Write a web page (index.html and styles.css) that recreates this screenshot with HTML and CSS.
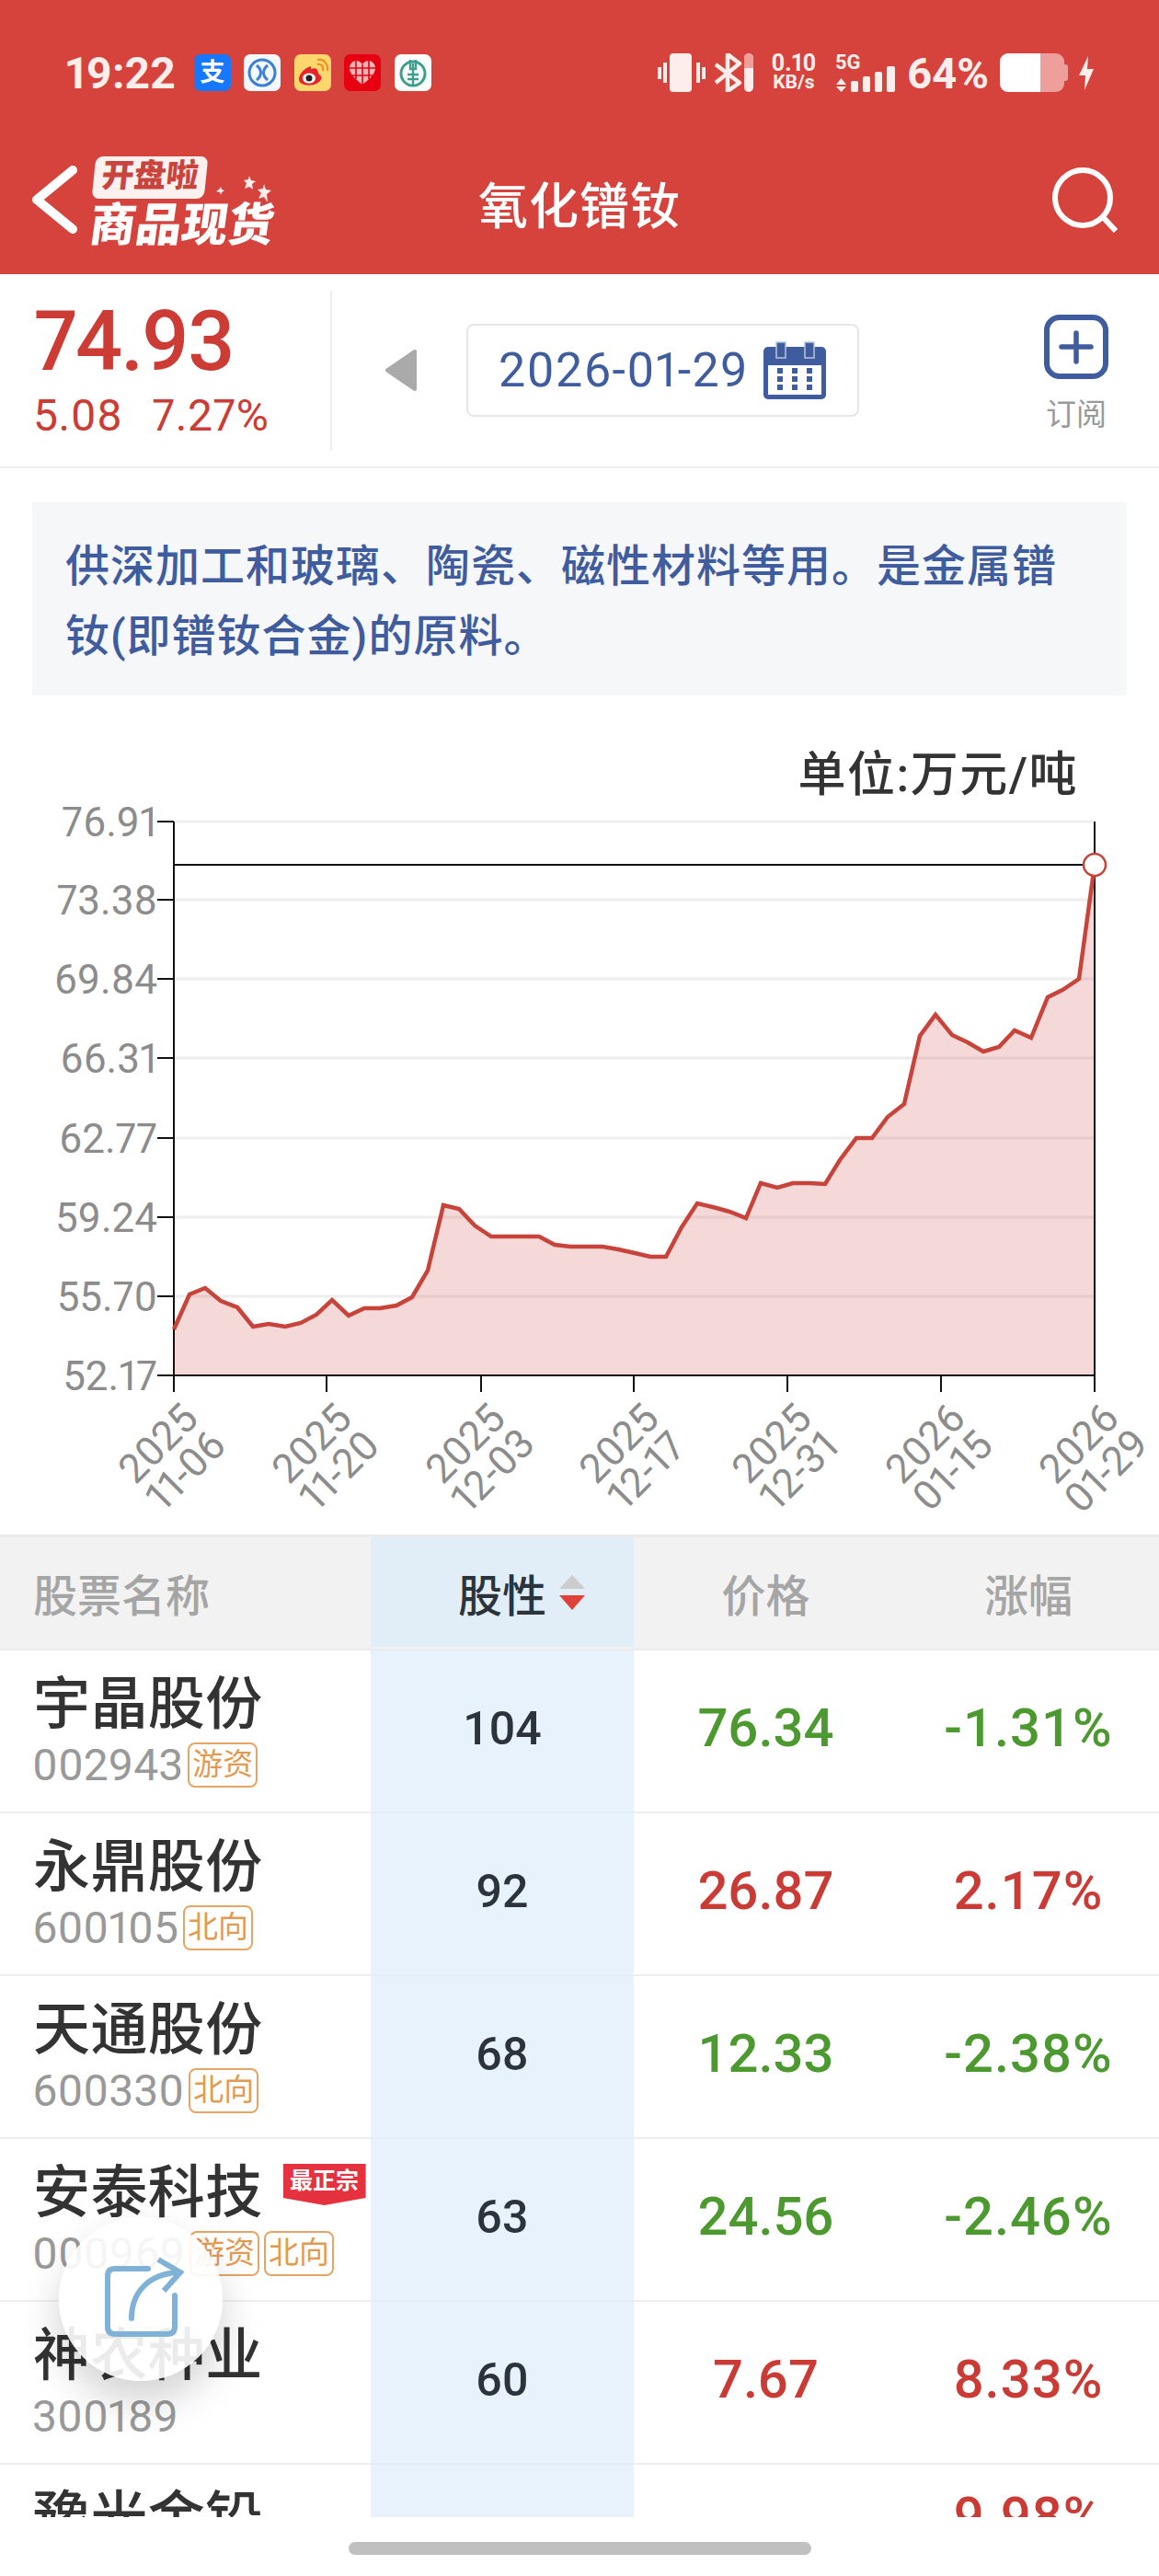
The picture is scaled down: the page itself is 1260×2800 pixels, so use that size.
FILE: index.html
```html
<!DOCTYPE html>
<html lang="zh-CN">
<head>
<meta charset="UTF-8">
<meta name="viewport" content="width=device-width, initial-scale=1.0">
<title>氧化镨钕</title>
<link rel="stylesheet" href="styles.css">
</head>
<body>

<header class="top-bar">
    <div class="status-row">
        <div class="status-left">
            <span class="clock">19:22</span>
            <div class="app-icons">
                <svg class="app-icon" viewBox="0 0 40 40">
                    <rect width="40" height="40" rx="7" fill="#1677ff"/>
                    <text x="20" y="29" text-anchor="middle" class="alipay-glyph">支</text>
                </svg>
                <svg class="app-icon" viewBox="0 0 40 40">
                    <rect width="40" height="40" rx="7" fill="#f4f7fb"/>
                    <circle cx="20" cy="20" r="14" fill="none" stroke="#3b7fd6" stroke-width="3"/>
                    <path d="M14 12c6 5 6 11 0 16M26 12c-6 5-6 11 0 16" fill="none" stroke="#3b7fd6" stroke-width="3"/>
                </svg>
                <svg class="app-icon" viewBox="0 0 40 40">
                    <rect width="40" height="40" rx="7" fill="#fdd66e"/>
                    <path d="M18 13c-7 2-14 9-13 15 1 6 12 7 19 4 6-3 7-8 3-10-1-1-1-3-2-5-1-2-4-2-7-1z" fill="#e6242b"/>
                    <ellipse cx="16" cy="26" rx="7" ry="5.5" fill="#fff"/>
                    <circle cx="16" cy="26" r="3.5" fill="#222"/>
                    <path d="M25 11c4-1 7 2 6 7M25 6c7-1 12 4 11 12" fill="none" stroke="#f08a1d" stroke-width="2"/>
                </svg>
                <svg class="app-icon" viewBox="0 0 40 40">
                    <rect width="40" height="40" rx="7" fill="#e60012"/>
                    <path d="M20 33C11 26 6 21 6 15c0-5 4-8 7-8 3 0 6 2 7 4 1-2 4-4 7-4 3 0 7 3 7 8 0 6-5 11-14 18z" fill="#f5b5b5"/>
                    <path d="M20 11v22M6 15h28M9 23h22M13 7v20M27 7v20" stroke="#e60012" stroke-width="1.6"/>
                </svg>
                <svg class="app-icon" viewBox="0 0 40 40">
                    <rect width="40" height="40" rx="7" fill="#fbfdfc"/>
                    <circle cx="20" cy="21" r="13" fill="none" stroke="#3f9f8c" stroke-width="3"/>
                    <path d="M17 6v10h6V6M20 10v24M14 22h12M14 27h12" fill="none" stroke="#3f9f8c" stroke-width="2.4"/>
                </svg>
            </div>
        </div>
        <div class="status-right">
            <svg class="vibrate-icon" viewBox="0 0 52 42">
                <rect x="13" width="24" height="42" rx="4"/>
                <rect y="15" width="4" height="13"/>
                <rect x="6" y="10" width="4" height="22"/>
                <rect x="42" y="10" width="4" height="22"/>
                <rect x="48" y="15" width="4" height="13"/>
            </svg>
            <svg class="bluetooth-icon" viewBox="0 0 42 42">
                <path d="M1 12L27 32L14 41V1L27 11L1 32" fill="none" stroke="#fdeeec" stroke-width="4.5" stroke-linejoin="round"/>
                <rect x="32" width="10" height="42" rx="5" fill="#fdeeec"/>
                <path d="M32 16V5a5 5 0 0 1 10 0v11z" fill="#f09f99"/>
            </svg>
            <div class="net-speed">
                <span class="speed-value">0.10</span>
                <span class="speed-unit">KB/s</span>
            </div>
            <svg class="signal-icon" viewBox="0 0 65 42">
                <text x="0" y="17" class="signal-text">5G</text>
                <path d="M6.500 27L12 34H1zM1 36H12L6.500 42z"/>
                <rect x="17" y="30" width="8" height="12" rx="2"/>
                <rect x="30" y="25" width="8" height="17" rx="2"/>
                <rect x="43" y="20" width="8" height="22" rx="2"/>
                <rect x="56" y="14" width="9" height="28" rx="2"/>
            </svg>
            <span class="battery-text">64%</span>
            <svg class="battery-icon" viewBox="0 0 74 42">
                <rect width="70" height="42" rx="9" fill="#ee9f9b"/>
                <path d="M9 0H44V42H9a9 9 0 0 1-9-9V9a9 9 0 0 1 9-9z" fill="#fff"/>
                <path d="M70 12h1a3 3 0 0 1 3 3v12a3 3 0 0 1-3 3h-1z" fill="#ee9f9b"/>
            </svg>
            <svg class="bolt-icon" viewBox="0 0 16 37">
                <path d="M10 0L0 21H7L6 37L16 14H9z" fill="#fdeeec"/>
            </svg>
        </div>
    </div>
    <nav class="nav-row">
        <div class="nav-left">
            <svg class="back-icon" viewBox="0 0 49 74">
                <path d="M44 5L5 37L44 69" fill="none" stroke="#fff" stroke-width="10" stroke-linecap="round" stroke-linejoin="round"/>
            </svg>
            <div class="logo">
                <div class="logo-top">
                    <span class="logo-badge"><span class="logo-badge-text">开盘啦</span></span>
                    <svg class="logo-stars" viewBox="0 0 60 30">
                        <path d="M36 0l2 5 5 1-4 3 1 6-4-3-5 2 2-6-3-3 5-1zM52 9l2 6 6 1-5 4 1 9-4-6-6 2 3-6-4-4 6-1zM5 12l1 3 3 1-3 2-1 3-1-3-4-1 3-2z" fill="#fdeeec"/>
                    </svg>
                </div>
                <div class="logo-name">商品现货</div>
            </div>
        </div>
        <h1 class="page-title">氧化镨钕</h1>
        <div class="nav-right">
            <svg class="search-icon" viewBox="0 0 71 71">
                <circle cx="33" cy="33" r="30" fill="none" stroke="#fff" stroke-width="6"/>
                <path d="M56 55L69 69" stroke="#fff" stroke-width="6"/>
            </svg>
        </div>
    </nav>
</header>

<section class="quote-row">
    <div class="price-box">
        <div class="price-now">74.93</div>
        <div class="price-change"><span>5.08</span><span>7.27%</span></div>
    </div>
    <svg class="prev-day" viewBox="0 0 36 47">
        <path d="M33 3V44L3 23.500z" fill="#aaa" stroke="#aaa" stroke-width="4" stroke-linejoin="round"/>
    </svg>
    <div class="date-box">
        <span class="date-text">2026-01-29</span>
        <svg class="calendar-icon" viewBox="0 0 68 63">
            <rect y="6" width="68" height="57" rx="5" fill="#3f5c9f"/>
            <rect x="5" y="26" width="58" height="32" fill="#fff"/>
            <rect x="14" y="1" width="10" height="17" fill="#3f5c9f" stroke="#b8c4dd" stroke-width="1.500"/>
            <rect x="45" y="1" width="10" height="17" fill="#3f5c9f" stroke="#b8c4dd" stroke-width="1.500"/>
            <path d="M15 29h6v6h-6zM31 29h6v6h-6zM47 29h6v6h-6zM15 38h6v6h-6zM31 38h6v6h-6zM47 38h6v6h-6zM15 47h6v6h-6zM31 47h6v6h-6zM47 47h6v6h-6z" fill="#3f5c9f"/>
        </svg>
    </div>
    <div class="subscribe">
        <svg class="subscribe-icon" viewBox="0 0 70 70">
            <rect x="3" y="3" width="64" height="64" rx="14" fill="none" stroke="#3f5c9f" stroke-width="6"/>
            <path d="M19 35H51M35 20V51" stroke="#3f5c9f" stroke-width="5.500" stroke-linecap="round"/>
        </svg>
        <span class="subscribe-label">订阅</span>
    </div>
</section>

<p class="intro">供深加工和玻璃、陶瓷、磁性材料等用。是金属镨钕(即镨钕合金)的原料。</p>

<section class="chart-section">
    <div class="chart-unit">单位:万元/吨</div>
    <svg class="price-chart" viewBox="0 870 1260 797">
        <g class="grid-lines">
            <path d="M189 892H1190M189 977H1190M189 1063H1190M189 1149H1190M189 1236H1190M189 1322H1190M189 1408H1190"/>
        </g>
        <path class="area" d="M189 1494V1444L206 1406L223 1399L240 1413L258 1420L275 1441L292 1438L310 1441L327 1437L344 1428L361 1412L379 1429L396 1421L413 1421L431 1418L448 1409L465 1380L482 1309L499 1313L516 1331L534 1343L586 1343L603 1352L620 1354L655 1354L672 1357L690 1361L707 1365L724 1365L741 1333L758 1307L775 1311L793 1316L811 1323L827 1285L845 1290L862 1285L880 1285L897 1286L913 1260L931 1236L948 1236L965 1213L983 1199L1000 1125L1017 1102L1035 1124L1052 1132L1069 1142L1086 1137L1103 1119L1121 1127L1139 1083L1155 1075L1173 1063L1190 939V1494z"/>
        <path class="axis" d="M171 892H189M171 977H189M171 1063H189M171 1149H189M171 1236H189M171 1322H189M171 1408H189M171 1494H1190M189 892V1512M355 1494V1512M523 1494V1512M689 1494V1512M856 1494V1512M1023 1494V1512M1190 892V1512"/>
        <path class="axis" d="M189 939H1190"/>
        <path class="line" d="M189 1444L206 1406L223 1399L240 1413L258 1420L275 1441L292 1438L310 1441L327 1437L344 1428L361 1412L379 1429L396 1421L413 1421L431 1418L448 1409L465 1380L482 1309L499 1313L516 1331L534 1343L586 1343L603 1352L620 1354L655 1354L672 1357L690 1361L707 1365L724 1365L741 1333L758 1307L775 1311L793 1316L811 1323L827 1285L845 1290L862 1285L880 1285L897 1286L913 1260L931 1236L948 1236L965 1213L983 1199L1000 1125L1017 1102L1035 1124L1052 1132L1069 1142L1086 1137L1103 1119L1121 1127L1139 1083L1155 1075L1173 1063L1190 939"/>
        <circle class="last-point" cx="1190" cy="939" r="12"/>
        <g class="y-labels">
            <text x="171" y="908">76.91</text>
            <text x="171" y="993">73.38</text>
            <text x="171" y="1079">69.84</text>
            <text x="171" y="1165">66.31</text>
            <text x="171" y="1252">62.77</text>
            <text x="171" y="1338">59.24</text>
            <text x="171" y="1424">55.70</text>
            <text x="171" y="1510">52.17</text>
        </g>
        <g class="x-labels">
            <g transform="translate(186 1582) rotate(-45)"><text y="-5">2025</text><text y="37">11-06</text></g>
            <g transform="translate(353 1582) rotate(-45)"><text y="-5">2025</text><text y="37">11-20</text></g>
            <g transform="translate(520 1582) rotate(-45)"><text y="-5">2025</text><text y="37">12-03</text></g>
            <g transform="translate(687 1582) rotate(-45)"><text y="-5">2025</text><text y="37">12-17</text></g>
            <g transform="translate(853 1582) rotate(-45)"><text y="-5">2025</text><text y="37">12-31</text></g>
            <g transform="translate(1020 1582) rotate(-45)"><text y="-5">2026</text><text y="37">01-15</text></g>
            <g transform="translate(1187 1582) rotate(-45)"><text y="-5">2026</text><text y="37">01-29</text></g>
        </g>
    </svg>
</section>

<section class="stock-table">
    <div class="table-head">
        <div class="head-cell head-name">股票名称</div>
        <div class="head-cell head-active">股性
            <svg class="sort-icon" viewBox="0 0 28 38">
                <path d="M14 0L28 15H0z" fill="#ccc"/>
                <path d="M0 22H28L14 38z" fill="#e0403a"/>
            </svg>
        </div>
        <div class="head-cell">价格</div>
        <div class="head-cell">涨幅</div>
    </div>

    <div class="stock-row">
        <div class="cell-name">
            <div class="stock-name">宇晶股份</div>
            <div class="stock-meta"><span class="stock-code">002943</span><span class="tag">游资</span></div>
        </div>
        <div class="cell-score">104</div>
        <div class="cell-num down">76.34</div>
        <div class="cell-num down">-1.31%</div>
    </div>
    <div class="stock-row">
        <div class="cell-name">
            <div class="stock-name">永鼎股份</div>
            <div class="stock-meta"><span class="stock-code">600105</span><span class="tag">北向</span></div>
        </div>
        <div class="cell-score">92</div>
        <div class="cell-num up">26.87</div>
        <div class="cell-num up">2.17%</div>
    </div>
    <div class="stock-row">
        <div class="cell-name">
            <div class="stock-name">天通股份</div>
            <div class="stock-meta"><span class="stock-code">600330</span><span class="tag">北向</span></div>
        </div>
        <div class="cell-score">68</div>
        <div class="cell-num down">12.33</div>
        <div class="cell-num down">-2.38%</div>
    </div>
    <div class="stock-row">
        <div class="cell-name">
            <div class="stock-name">安泰科技<span class="ribbon">最正宗</span></div>
            <div class="stock-meta"><span class="stock-code">000969</span><span class="tag">游资</span><span class="tag">北向</span></div>
        </div>
        <div class="cell-score">63</div>
        <div class="cell-num down">24.56</div>
        <div class="cell-num down">-2.46%</div>
    </div>
    <div class="stock-row">
        <div class="cell-name">
            <div class="stock-name">神农种业</div>
            <div class="stock-meta"><span class="stock-code">300189</span></div>
        </div>
        <div class="cell-score">60</div>
        <div class="cell-num up">7.67</div>
        <div class="cell-num up">8.33%</div>
    </div>
    <div class="stock-row">
        <div class="cell-name">
            <div class="stock-name">豫光金铅</div>
        </div>
        <div class="cell-score"></div>
        <div class="cell-num up"></div>
        <div class="cell-num up cell-raised">9.98%</div>
    </div>
</section>

<footer class="home-area">
    <div class="home-bar"></div>
</footer>

<div class="share-button">
    <svg class="share-icon" viewBox="0 0 90 90">
        <path d="M50 14H14Q6 14 6 22V77Q6 85 14 85H71Q79 85 79 77V43" fill="none" stroke="#7fb2d6" stroke-width="6" stroke-linecap="round"/>
        <path d="M32 68C32 40 50 20 82 18" fill="none" stroke="#7fb2d6" stroke-width="6" stroke-linecap="round"/>
        <path d="M61 4L85 18L67 38" fill="none" stroke="#7fb2d6" stroke-width="6"/>
    </svg>
</div>

</body>
</html>
```

FILE: styles.css
```css
* {
    box-sizing: border-box;
}
body {
    position: relative;
    margin: 0;
    width: 1260px;
    height: 2800px;
    overflow: hidden;
    background-color: #fff;
    font-family: Roboto, "Noto Sans CJK SC", sans-serif;
    font-variant-numeric: proportional-nums;
    color: #333;
}

/* red header */
.top-bar {
    height: 298px;
    background-color: #d5433c;
    color: #fdeeec;
}
.status-row {
    display: flex;
    justify-content: space-between;
    height: 137px;
    padding: 58px 71px 0;
}
.status-left {
    display: flex;
    align-items: center;
    gap: 20px;
    height: 42px;
}
.clock {
    font-size: 48px;
    font-weight: 700;
}
.app-icons {
    display: flex;
    gap: 14.500px;
}
.app-icon {
    width: 40px;
    height: 40px;
}
.alipay-glyph {
    font-size: 27px;
    font-weight: 700;
    fill: #fff;
}
.status-right {
    display: flex;
    align-items: center;
    height: 42px;
}
.vibrate-icon {
    width: 52px;
    height: 42px;
    fill: #fdeeec;
}
.bluetooth-icon {
    width: 42px;
    height: 42px;
    margin-left: 10px;
}
.net-speed {
    display: flex;
    flex-direction: column;
    align-items: center;
    width: 50px;
    margin-left: 19px;
    line-height: 21px;
    font-weight: 700;
}
.speed-value {
    font-size: 25px;
}
.speed-unit {
    font-size: 21px;
}
.signal-icon {
    width: 65px;
    height: 42px;
    margin-left: 20px;
    fill: #fdeeec;
}
.signal-text {
    font-size: 22px;
    font-weight: 700;
}
.battery-text {
    margin-left: 13px;
    font-size: 47px;
    font-weight: 700;
}
.battery-icon {
    width: 74px;
    height: 42px;
    margin-left: 12px;
}
.bolt-icon {
    width: 16px;
    height: 37px;
    margin-left: 12px;
}
.nav-row {
    display: grid;
    grid-template-columns: 1fr auto 1fr;
    align-items: center;
    height: 160px;
    padding: 0 45px 0 35px;
}
.nav-left {
    display: flex;
    align-items: center;
}
.back-icon {
    width: 49px;
    height: 74px;
}
.logo {
    display: flex;
    flex-direction: column;
    margin-left: 14px;
}
.logo-top {
    display: flex;
    align-items: flex-end;
    margin-left: 4px;
}
.logo-badge {
    display: flex;
    justify-content: center;
    width: 122px;
    height: 46px;
    border-radius: 8px;
    background-color: #fdf1ef;
    transform: skewX(-6deg);
}
.logo-badge-text {
    font-size: 35px;
    font-weight: 900;
    line-height: 44px;
    color: #c9443c;
    white-space: nowrap;
}
.logo-stars {
    width: 60px;
    height: 30px;
    margin: 0 0 -5px 11px;
}
.logo-name {
    margin-top: 9px;
    font-size: 50px;
    font-weight: 900;
    line-height: 40px;
    color: #fff;
    white-space: nowrap;
    transform: skewX(-8deg);
}
.page-title {
    margin: 6px 0 0 10px;
    font-size: 54px;
    font-weight: 500;
    letter-spacing: 1px;
    color: #fff;
}
.nav-right {
    display: flex;
    justify-content: flex-end;
}
.search-icon {
    width: 71px;
    height: 71px;
}

/* price and date */
.quote-row {
    display: flex;
    align-items: center;
    height: 211px;
    border-bottom: 2px solid #eee;
    padding-right: 55px;
}
.price-box {
    width: 361px;
    height: 174px;
    padding: 10px 0 0 37px;
    border-right: 2px solid #eee;
    color: #cc3b34;
}
.price-now {
    font-size: 90px;
    font-weight: 500;
    line-height: 92px;
    letter-spacing: -2px;
}
.price-change {
    display: flex;
    gap: 32px;
    margin: 8px 0 0 -1px;
    font-size: 48px;
    line-height: 52px;
    letter-spacing: 0.5px;
}
.prev-day {
    width: 36px;
    height: 47px;
    margin: 0 53px 0 57px;
}
.date-box {
    display: flex;
    align-items: center;
    justify-content: space-between;
    width: 427px;
    height: 101px;
    padding: 0 34px 0 33px;
    border: 2px solid #e6e6e6;
    border-radius: 8px;
}
.date-text {
    font-size: 52px;
    letter-spacing: 1.300px;
    color: #3f5c9f;
}
.calendar-icon {
    width: 68px;
    height: 63px;
}
.subscribe {
    display: flex;
    flex-direction: column;
    align-items: center;
    margin: 9px 0 0 auto;
}
.subscribe-icon {
    width: 70px;
    height: 70px;
}
.subscribe-label {
    margin-top: 17px;
    font-size: 33px;
    line-height: 44px;
    color: #999;
}

/* description */
.intro {
    height: 210px;
    margin: 37px 35px 0;
    padding: 32px 36px 23px;
    background-color: #f6f7f9;
    font-size: 48px;
    font-weight: 500;
    line-height: 76px;
    letter-spacing: 1px;
    color: #3f5c9f;
}

/* chart */
.chart-section {
    height: 912px;
    padding-top: 59px;
}
.chart-unit {
    height: 56px;
    padding-right: 88px;
    font-size: 52px;
    font-weight: 500;
    line-height: 56px;
    letter-spacing: 1.500px;
    text-align: right;
}
.price-chart {
    display: block;
    width: 1260px;
    height: 797px;
}
.grid-lines path {
    fill: none;
    stroke: #eee;
    stroke-width: 3;
}
.area {
    fill: rgba(205, 60, 60, 0.2);
}
.axis {
    fill: none;
    stroke: #111;
    stroke-width: 2;
}
.line {
    fill: none;
    stroke: #c8433a;
    stroke-width: 4.500;
}
.last-point {
    fill: #fff;
    stroke: #c8433a;
    stroke-width: 2.500;
}
.y-labels text {
    font-size: 44px;
    fill: #8c8c8c;
    text-anchor: end;
}
.x-labels text {
    font-size: 44px;
    fill: #8c8c8c;
    text-anchor: middle;
}

/* stock table */
.stock-table {
    height: 1068px;
    overflow: hidden;
}
.table-head,
.stock-row {
    display: grid;
    grid-template-columns: 403px 286px 287px 284px;
}
.table-head {
    height: 126px;
    padding-bottom: 2px;
    border-top: 3px solid #ebebeb;
    border-bottom: 2px solid #ebebeb;
    background-color: #f2f2f2;
}
.head-cell {
    display: flex;
    align-items: center;
    justify-content: center;
    font-size: 48px;
    font-weight: 500;
    color: #a5a5a5;
}
.head-name {
    justify-content: flex-start;
    padding-left: 36px;
}
.head-active {
    gap: 14px;
    background-color: #e1edf7;
    color: #2c333a;
}
.sort-icon {
    width: 28px;
    height: 38px;
    margin-right: -42px;
}
.stock-row {
    height: 177px;
}
.stock-row > div {
    border-bottom: 2px solid #eee;
}
.cell-name {
    padding: 24px 0 0 37px;
}
.stock-name {
    display: flex;
    align-items: flex-start;
    margin-left: -1px;
    font-size: 62px;
    font-weight: 500;
    line-height: 70px;
    letter-spacing: 0.4px;
}
.ribbon {
    display: flex;
    justify-content: center;
    width: 90px;
    height: 45px;
    margin: 3px 0 0 22px;
    background-color: #e5323e;
    clip-path: polygon(0 0, 100% 0, 100% 82%, 50% 100%, 0 82%);
    font-size: 25px;
    font-weight: 700;
    line-height: 38px;
    letter-spacing: 0;
    color: #fff;
}
.stock-meta {
    display: flex;
    align-items: center;
    gap: 5px;
    margin-top: 6px;
    margin-left: -2px;
}
.stock-code {
    font-size: 48px;
    line-height: 49px;
    color: #999;
}
.tag {
    width: 76px;
    height: 49px;
    border: 2px solid #e5a565;
    border-radius: 8px;
    font-size: 33px;
    line-height: 44px;
    text-align: center;
    color: #e39a50;
}
.stock-row > .cell-score {
    display: flex;
    align-items: center;
    justify-content: center;
    padding-bottom: 6px;
    background-color: #e8f2fc;
    border-bottom-color: #e4eef8;
    font-size: 50px;
    font-weight: 500;
    font-variant-numeric: tabular-nums;
    color: #2c333a;
}
.cell-num {
    display: flex;
    align-items: center;
    justify-content: center;
    padding-bottom: 8px;
    font-size: 58px;
    font-weight: 500;
    font-variant-numeric: tabular-nums;
}
.cell-num + .cell-num {
    letter-spacing: 1px;
}
.cell-raised {
    padding-bottom: 64px;
}
.up {
    color: #cb3b35;
}
.down {
    color: #4c9a2f;
}

/* bottom gesture bar */
.home-area {
    display: flex;
    justify-content: center;
    height: 65px;
    padding-top: 27px;
}
.home-bar {
    width: 503px;
    height: 14px;
    border-radius: 7px;
    background-color: #c0c0c0;
}

/* floating share button */
.share-button {
    position: absolute;
    left: 64px;
    top: 2410px;
    display: flex;
    align-items: center;
    justify-content: center;
    width: 178px;
    height: 178px;
    padding: 0 0 4px 5px;
    border-radius: 50%;
    background-color: rgba(255, 255, 255, 0.9);
    box-shadow: 0 22px 44px rgba(0, 0, 0, 0.18);
}
.share-icon {
    width: 90px;
    height: 90px;
}
```
